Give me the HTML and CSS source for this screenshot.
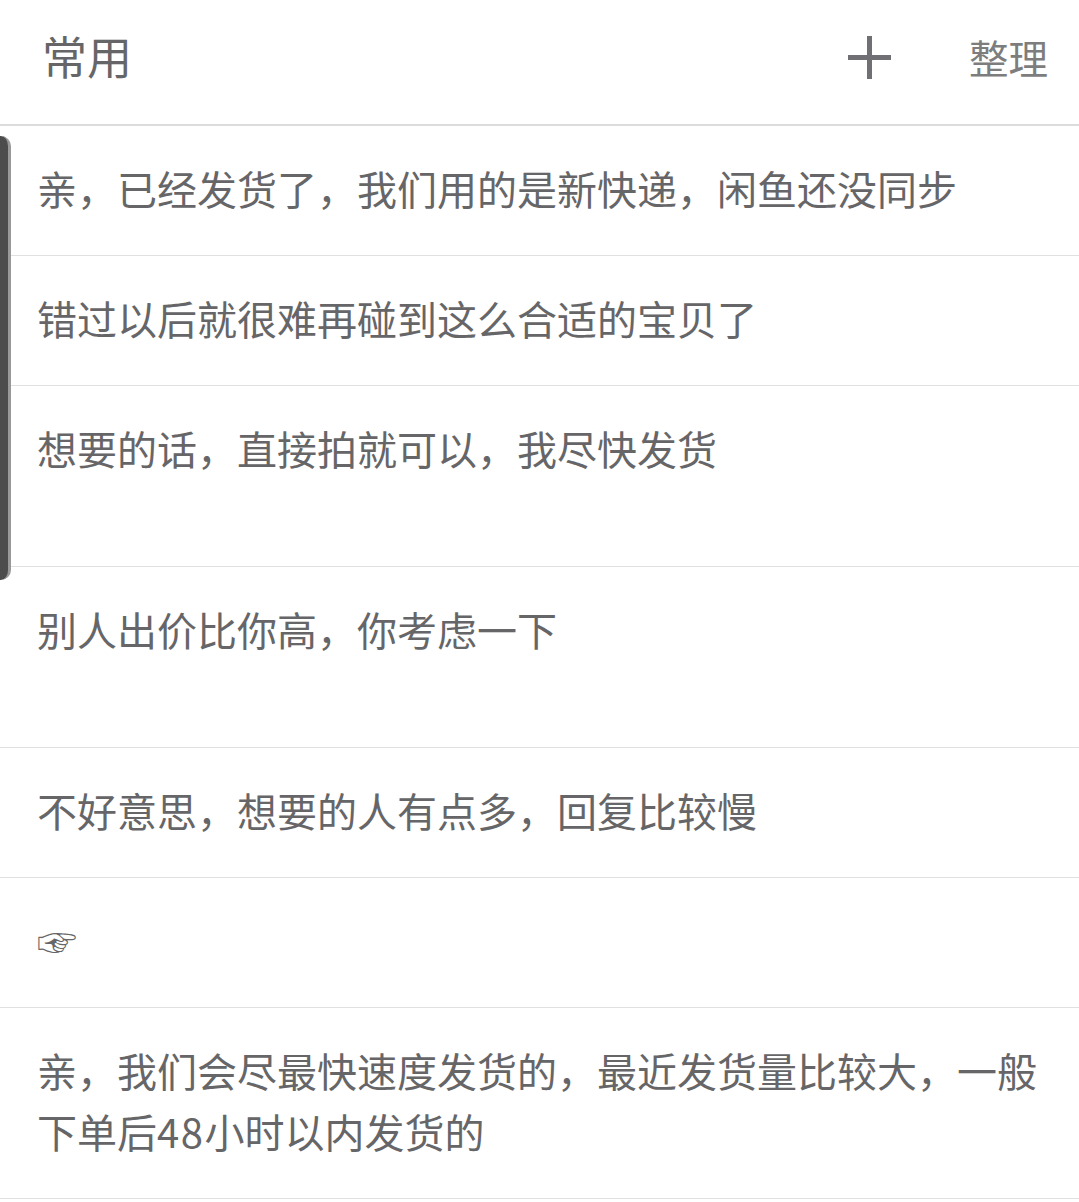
FILE: index.html
```html
<!DOCTYPE html>
<html lang="zh-CN">
<head>
<meta charset="utf-8">
<title>常用</title>
<link rel="stylesheet" href="styles.css">
</head>
<body>
<div class="page">
  <header class="header">
    <h1 class="title">常用</h1>
    <div class="actions">
      <svg class="plus" viewBox="0 0 43 43" aria-hidden="true"><path d="M21.5 0V43M0 21.5H43" /></svg>
      <span class="manage">整理</span>
    </div>
  </header>
  <ul class="list">
    <li class="row">亲，已经发货了，我们用的是新快递，闲鱼还没同步</li>
    <li class="row">错过以后就很难再碰到这么合适的宝贝了</li>
    <li class="row row-tall">想要的话，直接拍就可以，我尽快发货</li>
    <li class="row row-tall">别人出价比你高，你考虑一下</li>
    <li class="row">不好意思，想要的人有点多，回复比较慢</li>
    <li class="row"><div class="hand">☞</div></li>
    <li class="row">亲，我们会尽最快速度发货的，最近发货量比较大，一般<br>下单后<span class="num">48</span>小时以内发货的</li>
  </ul>
  <div class="edge-tab"></div>
</div>
</body>
</html>
```

FILE: styles.css
```css
html, body {
  margin: 0;
  padding: 0;
  background: #fff;
}
.page {
  position: relative;
  width: 1079px;
  height: 1202px;
  overflow: hidden;
  font-family: "Noto Sans CJK SC", "Noto Sans", sans-serif;
  color: #666668;
}
.header {
  box-sizing: border-box;
  height: 126px;
  display: flex;
  align-items: center;
  justify-content: space-between;
  padding: 0 31px 9px 42px;
  border-bottom: 2px solid #dcdcdc;
}
.title {
  margin: 0;
  padding-bottom: 4px;
  font-size: 45px;
  font-weight: 400;
  line-height: 60px;
}
.actions {
  display: flex;
  align-items: center;
  gap: 78px;
}
.plus {
  width: 43px;
  height: 43px;
  stroke: #6f6f74;
  stroke-width: 5;
  fill: none;
}
.manage {
  padding-bottom: 2px;
  font-size: 39.5px;
  line-height: 60px;
  color: #7d7d7d;
}
.list {
  margin: 0;
  padding: 0;
  list-style: none;
}
.row {
  box-sizing: border-box;
  min-height: 130px;
  padding: 32px 20px 36.5px 37px;
  border-bottom: 1px solid #e0e0e0;
  font-size: 40px;
  line-height: 60.5px;
}
.row-tall {
  min-height: 181px;
}
.num {
  letter-spacing: 1.5px;
}
.hand {
  height: 60px;
  overflow: hidden;
  font-family: "Noto Sans CJK KR", "Noto Sans CJK SC", sans-serif;
  font-size: 40px;
  line-height: 60px;
}
.edge-tab {
  position: absolute;
  left: 0;
  top: 136px;
  width: 11px;
  height: 444px;
  box-sizing: border-box;
  background: #4c4c4c;
  border-right: 3px solid #999;
  border-radius: 0 10px 10px 0;
}
```
